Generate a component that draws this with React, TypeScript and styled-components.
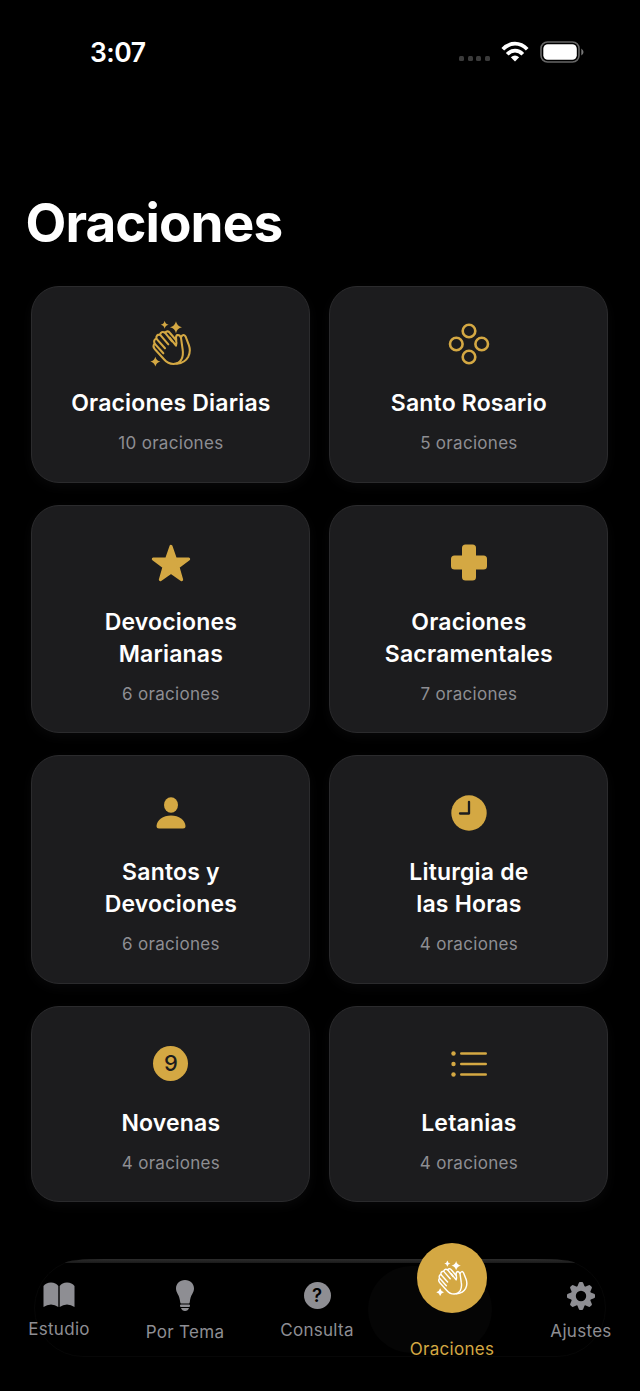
import React from "react";
import styled, { createGlobalStyle } from "styled-components";

const GOLD = "#d4a843";
const CARD = "#1c1c1e";
const GRAY = "#8e8e93";

const GlobalStyle = createGlobalStyle`
  * { box-sizing: border-box; }
  body { margin: 0; background: #000; }
`;

const Screen = styled.div`
  width: 640px;
  height: 1391px;
  display: flex;
  flex-direction: column;
  overflow: hidden;
  background: #000;
  color: #fff;
  font-family: Inter, "Liberation Sans", sans-serif;
`;

const StatusBar = styled.header`
  display: flex;
  justify-content: space-between;
  align-items: center;
  height: 103px;
  padding: 0 56px 0 90px;
`;

const Clock = styled.span`
  font-size: 26.5px;
  font-weight: 600;
  letter-spacing: -0.5px;
`;

const StatusIcons = styled.div`
  display: flex;
  align-items: center;
  gap: 11px;
`;

const Dots = styled.div`
  display: flex;
  gap: 3.6px;
  padding-top: 14px;
`;

const Dot = styled.i`
  width: 5px;
  height: 5px;
  border-radius: 1.5px;
  background: #3b3b3b;
`;

const Title = styled.h1`
  margin: 87px 0 0;
  padding-left: 25.5px;
  height: 96px;
  line-height: 66px;
  font-size: 53px;
  font-weight: 700;
  letter-spacing: -0.9px;
`;

const Grid = styled.main`
  display: grid;
  grid-template-columns: 279px 279px;
  column-gap: 19px;
  row-gap: 22px;
  padding-left: 31.4px;
`;

const Card = styled.section`
  display: flex;
  flex-direction: column;
  align-items: center;
  padding: 35px 20px 26.5px;
  border: 1px solid #2b2b2d;
  border-radius: 28px;
  background: ${CARD};
  text-align: center;
  box-shadow: 0 4px 12px rgba(28, 28, 30, 0.3);
`;

const CardIcon = styled.div`
  display: flex;
  align-items: center;
  justify-content: center;
  height: 44px;
  margin-bottom: 21px;
`;

const CardTitle = styled.h2`
  margin: 0;
  font-size: 23px;
  font-weight: 600;
  line-height: 32px;
  letter-spacing: 0.18px;
  white-space: pre-line;
`;

const CardCount = styled.p`
  margin: 12px 0 0;
  font-size: 17px;
  line-height: 24px;
  letter-spacing: 0.3px;
  color: ${GRAY};
`;

const TabBar = styled.nav`
  position: relative;
  display: flex;
  width: 572px;
  height: 98px;
  margin: 57px 0 0 34px;
  border-radius: 49px;
  border: 1px solid #070707;
`;

const TopGlow = styled.span`
  position: absolute;
  left: 30px;
  right: 30px;
  top: -1px;
  height: 4px;
  border-radius: 40px 40px 0 0 / 4px 4px 0 0;
  background: linear-gradient(#2c2c2c, #1a1a1a);
`;

const ActivePill = styled.span`
  position: absolute;
  left: 333px;
  top: 6px;
  width: 124px;
  height: 87px;
  border-radius: 44px;
  background: #050505;
`;

const Tab = styled.a<{ $x: number; $top: number; $gap: number; $active?: boolean }>`
  position: absolute;
  left: ${(p) => p.$x - 95}px;
  top: ${(p) => p.$top}px;
  width: 120px;
  display: flex;
  flex-direction: column;
  align-items: center;
  gap: ${(p) => p.$gap}px;
  font-size: 17px;
  line-height: 22px;
  letter-spacing: 0.3px;
  color: ${(p) => (p.$active ? GOLD : GRAY)};
`;

const ActiveDisc = styled.span`
  display: flex;
  align-items: center;
  justify-content: center;
  width: 70px;
  height: 70px;
  border-radius: 50%;
  background: ${GOLD};
`;

const Hands = ({ width, color, stroke }: { width: number; color: string; stroke: number }) => (
  <svg width={width} height={width * 1.145} viewBox="62 31 124 142" fill="none" stroke={color} strokeWidth={stroke} strokeLinecap="round" strokeLinejoin="round">
    <path d="M140 108 L121 84 M140 108 Q143 100 140 91 L122 70 Q115 61 107 69 Q96 63 92 75 Q80 74 81 87 Q71 91 76 102 Q69 109 76 118 L104 149 Q116 163 132 163 Q148 163 156 150 Q163 137 160 119 L155 84 Q152 75 144 76 Q138 80 141 92" />
    <path d="M107 69 L128 95 M92 75 L117 104 M81 87 L107 116 M76 102 L102 131" />
    <path d="M155 83 Q162 70 169 81 L179 107 Q185 125 177 141 Q167 159 143 162" />
    <g fill={color} stroke="none">
      <path d="M140 35 Q143 50 158 53 Q143 56 140 71 Q137 56 122 53 Q137 50 140 35Z" />
      <path d="M106 33 Q108 43 118 45 Q108 47 106 57 Q104 47 94 45 Q104 43 106 33Z" />
      <path d="M78 141 Q81 153 93 156 Q81 159 78 171 Q75 159 63 156 Q75 153 78 141Z" />
    </g>
  </svg>
);

const Rosary = () => (
  <svg width="42" height="42" viewBox="-21 -21 42 42" fill="none" stroke={GOLD} strokeWidth="2.6">
    <circle cx="0" cy="-13" r="6.3" />
    <circle cx="0" cy="13" r="6.3" />
    <circle cx="-12.7" cy="0" r="6.3" />
    <circle cx="12.7" cy="0" r="6.3" />
  </svg>
);

const Star = () => (
  <svg width="40" height="40" viewBox="130 35 120 120" fill={GOLD} stroke={GOLD} strokeWidth="9" strokeLinejoin="round">
    <path d="M190 45 L203 82 L243 83 L211 107 L222 145 L190 122.500 L158 145 L169 107 L137 83 L177 82Z" />
  </svg>
);

const Cross = () => (
  <svg width="36" height="37" viewBox="0 0 36 37" fill={GOLD}>
    <rect x="11" y="0.500" width="14" height="36" rx="3.500" />
    <rect x="0" y="11.500" width="36" height="14" rx="3.500" />
  </svg>
);

const Person = () => (
  <svg width="30" height="32" viewBox="0 0 30 32" fill={GOLD}>
    <ellipse cx="15" cy="8" rx="7" ry="7.700" />
    <path d="M3 31.500 Q0.500 31.500 0.500 29 C1 23 7 18.500 15 18.500 S29 23 29.500 29 Q29.500 31.500 27 31.500Z" />
  </svg>
);

const ClockIcon = () => (
  <svg width="36" height="36" viewBox="0 0 36 36">
    <circle cx="18" cy="18" r="17.700" fill={GOLD} />
    <path d="M18 6.800 V18.500 H9" fill="none" stroke={CARD} strokeWidth="2.300" strokeLinecap="round" strokeLinejoin="round" />
  </svg>
);

const NumberDisc = styled.span`
  width: 35px;
  height: 35px;
  border-radius: 50%;
  background: ${GOLD};
  color: ${CARD};
  font-size: 22px;
  font-weight: 500;
  line-height: 35px;
`;

const ListIcon = () => (
  <svg width="36" height="28" viewBox="0 0 36 28" stroke={GOLD} strokeWidth="2.600" strokeLinecap="round">
    {[3.5, 14, 24.5].map((y) => (
      <g key={y}>
        <circle cx="2.500" cy={y} r="2.200" fill={GOLD} stroke="none" />
        <path d={`M10.300 ${y}H34.700`} />
      </g>
    ))}
  </svg>
);

const Book = () => (
  <svg width="32" height="26" viewBox="0 0 32 26" fill={GRAY}>
    <path d="M0.500 4 Q3 0.500 8 0.500 Q13 0.500 15.300 4 V25 Q12 22.500 8 22.500 Q4 22.500 0.500 25Z" />
    <path d="M16.700 4 Q19 0.500 24 0.500 Q29 0.500 31.500 4 V25 Q28 22.500 24 22.500 Q20 22.500 16.700 25Z" />
  </svg>
);

const Bulb = () => (
  <svg width="18" height="31" viewBox="0 0 18 31" fill={GRAY}>
    <path d="M9 0 C14.500 0 18 4 18 8.500 C18 13 14.500 14.500 13.800 22 Q13.700 23.500 12.800 23.500 H5.200 Q4.300 23.500 4.200 22 C3.500 14.500 0 13 0 8.500 C0 4 3.500 0 9 0Z" />
    <rect x="4" y="24.600" width="10" height="2.300" rx="1" />
    <path d="M5 28 H13 Q12 31 9 31 T5 28Z" />
  </svg>
);

const Help = styled.span`
  width: 27px;
  height: 27px;
  border-radius: 50%;
  background: ${GRAY};
  color: #000;
  font-size: 18.5px;
  font-weight: 600;
  line-height: 27px;
  text-align: center;
  letter-spacing: 0;
`;

const Gear = () => (
  <svg width="28" height="28" viewBox="-14 -14 28 28">
    <g fill={GRAY}>
      {[0, 45, 90, 135, 180, 225, 270, 315].map((a) => (
        <path key={a} transform={`rotate(${a})`} d="M-3.800 -9 L-2.200 -13 Q-1.900 -14 -1 -14 H1 Q1.900 -14 2.200 -13 L3.800 -9Z" />
      ))}
    </g>
    <circle r="7.700" fill="none" stroke={GRAY} strokeWidth="5" />
  </svg>
);

const Wifi = () => (
  <svg width="28" height="21" viewBox="0 0 28 21" fill="none" stroke="#fff" strokeWidth="3.800">
    <path d="M1.800 8.300 Q7.200 2.700 14 2.700 T26.200 8.300" />
    <path d="M6.200 13.300 Q9.700 9.700 14 9.700 T21.800 13.300" />
    <path d="M14 20.500 L9.800 16.200 Q14 12.800 18.200 16.200Z" fill="#fff" stroke="none" />
  </svg>
);

const Battery = () => (
  <svg width="44" height="22" viewBox="0 0 44 22">
    <rect x="1" y="1" width="38" height="20" rx="6.500" fill="none" stroke="#666" strokeWidth="1.600" />
    <rect x="3.300" y="3.300" width="33.500" height="15.400" rx="4.500" fill="#fff" />
    <path d="M41.300 7.500 Q43.500 9 43.500 11 T41.300 14.500Z" fill="#777" />
  </svg>
);

const cards = [
  { title: "Oraciones Diarias", count: 10, icon: <Hands width={41.3} color={GOLD} stroke={6.2} /> },
  { title: "Santo Rosario", count: 5, icon: <Rosary /> },
  { title: "Devociones\nMarianas", count: 6, icon: <Star /> },
  { title: "Oraciones\nSacramentales", count: 7, icon: <Cross /> },
  { title: "Santos y\nDevociones", count: 6, icon: <Person /> },
  { title: "Liturgia de\nlas Horas", count: 4, icon: <ClockIcon /> },
  { title: "Novenas", count: 4, icon: <NumberDisc>9</NumberDisc> },
  { title: "Letanias", count: 4, icon: <ListIcon /> },
];

export default function App() {
  return (
    <Screen>
      <GlobalStyle />
      <StatusBar>
        <Clock>3:07</Clock>
        <StatusIcons>
          <Dots><Dot /><Dot /><Dot /><Dot /></Dots>
          <Wifi />
          <Battery />
        </StatusIcons>
      </StatusBar>
      <Title>Oraciones</Title>
      <Grid>
        {cards.map((c) => (
          <Card key={c.title}>
            <CardIcon>{c.icon}</CardIcon>
            <CardTitle>{c.title}</CardTitle>
            <CardCount>{c.count} oraciones</CardCount>
          </Card>
        ))}
      </Grid>
      <TabBar>
        <TopGlow />
        <ActivePill />
        <Tab $x={59} $top={22} $gap={10}><Book />Estudio</Tab>
        <Tab $x={185} $top={20} $gap={10}><Bulb />Por Tema</Tab>
        <Tab $x={317} $top={22} $gap={10}><Help>?</Help>Consulta</Tab>
        <Tab $x={452} $top={-17} $gap={25} $active>
          <ActiveDisc><Hands width={32} color="#fff" stroke={5.6} /></ActiveDisc>
          Oraciones
        </Tab>
        <Tab $x={581} $top={22} $gap={10}><Gear />Ajustes</Tab>
      </TabBar>
    </Screen>
  );
}
